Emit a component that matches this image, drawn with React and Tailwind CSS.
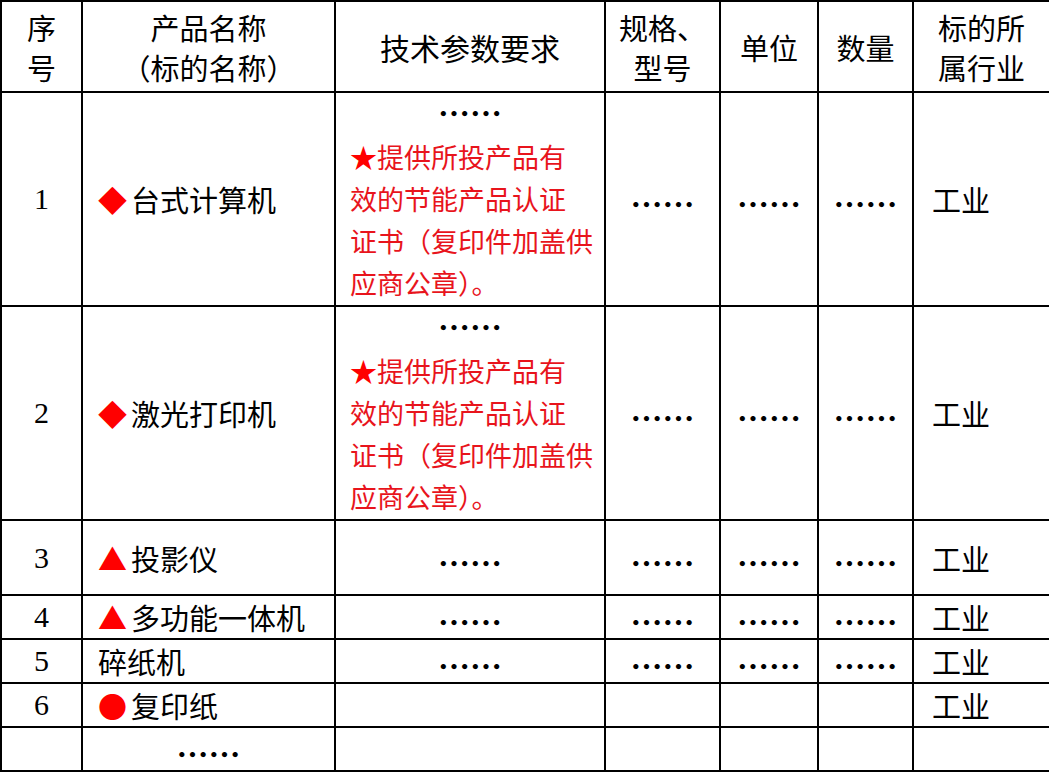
import React from "react";

const cjk = "font-['Noto_Sans_CJK_SC','Noto_Sans',sans-serif]";
const serif = "font-['Liberation_Serif','Noto_Sans_CJK_SC',serif]";

const cell = "border-2 border-black p-0 align-middle";

// bold, vertically centred ellipsis like the reference
const Dots = () => <span className="font-bold text-[32px] leading-none align-middle">……</span>;

// red marks before product names
const Mark = ({ type }) => {
  if (!type) return null;
  const glyph = { diamond: "◆", triangle: "▲", circle: "●" }[type];
  return <span className="text-[#ff0000] mr-[4px]">{glyph}</span>;
};

const Requirement = () => (
  <div className="leading-[42px]">
    <div className="text-center h-[42px] flex items-center justify-center pb-[6px]">
      <Dots />
    </div>
    <div className="pl-[14px] text-left text-[27px] text-[#e8141c] whitespace-nowrap">
      <div>
        <span className="text-[#ff0000]">★</span>提供所投产品有
      </div>
      <div>效的节能产品认证</div>
      <div>证书（复印件加盖供</div>
      <div>应商公章）。</div>
    </div>
  </div>
);

const rows = [
  { no: "1", mark: "diamond", name: "台式计算机", req: true, h: "h-[214px]", dots: true, trade: "工业" },
  { no: "2", mark: "diamond", name: "激光打印机", req: true, h: "h-[214px]", dots: true, trade: "工业" },
  { no: "3", mark: "triangle", name: "投影仪", h: "h-[75px]", dots: true, trade: "工业" },
  { no: "4", mark: "triangle", name: "多功能一体机", h: "h-[44px]", dots: true, trade: "工业" },
  { no: "5", name: "碎纸机", h: "h-[44px]", dots: true, trade: "工业" },
  { no: "6", mark: "circle", name: "复印纸", h: "h-[44px]", trade: "工业" },
];

export default function App() {
  return (
    <div className={`bg-white w-[1049px] h-[772px] overflow-hidden text-black ${cjk}`} lang="zh-CN">
      <table className="table-fixed border-collapse w-[1049px]">
        <colgroup>
          <col className="w-[81px]" />
          <col className="w-[253px]" />
          <col className="w-[270px]" />
          <col className="w-[115px]" />
          <col className="w-[98px]" />
          <col className="w-[95px]" />
          <col className="w-[137px]" />
        </colgroup>
        <thead>
          <tr className="h-[91px] text-[29px] leading-[40px] text-center">
            <th className={`${cell} font-normal`}>序<br />号</th>
            <th className={`${cell} font-normal`}>产品名称<br />（标的名称）</th>
            <th className={`${cell} font-normal text-[30px]`}>技术参数要求</th>
            <th className={`${cell} font-normal`}>规格、<br />型号</th>
            <th className={`${cell} font-normal`}>单位</th>
            <th className={`${cell} font-normal`}>数量</th>
            <th className={`${cell} font-normal`}>标的所<br />属行业</th>
          </tr>
        </thead>
        <tbody className="text-[29px] leading-[40px]">
          {rows.map((r) => (
            <tr key={r.no} className={r.h}>
              <td className={`${cell} text-center text-[30px] ${serif}`}>{r.no}</td>
              <td className={`${cell} pl-[15px] whitespace-nowrap`}>
                <Mark type={r.mark} />
                {r.name}
              </td>
              <td className={`${cell} text-center`}>
                {r.req ? <Requirement /> : r.dots ? <Dots /> : ""}
              </td>
              <td className={`${cell} text-center`}>{r.dots ? <Dots /> : ""}</td>
              <td className={`${cell} text-center`}>{r.dots ? <Dots /> : ""}</td>
              <td className={`${cell} text-center`}>{r.dots ? <Dots /> : ""}</td>
              <td className={`${cell} pl-[18px]`}>{r.trade}</td>
            </tr>
          ))}
          <tr className="h-[44px]">
            <td className={cell}></td>
            <td className={`${cell} text-center`}>
              <Dots />
            </td>
            <td className={cell}></td>
            <td className={cell}></td>
            <td className={cell}></td>
            <td className={cell}></td>
            <td className={cell}></td>
          </tr>
        </tbody>
      </table>
    </div>
  );
}
